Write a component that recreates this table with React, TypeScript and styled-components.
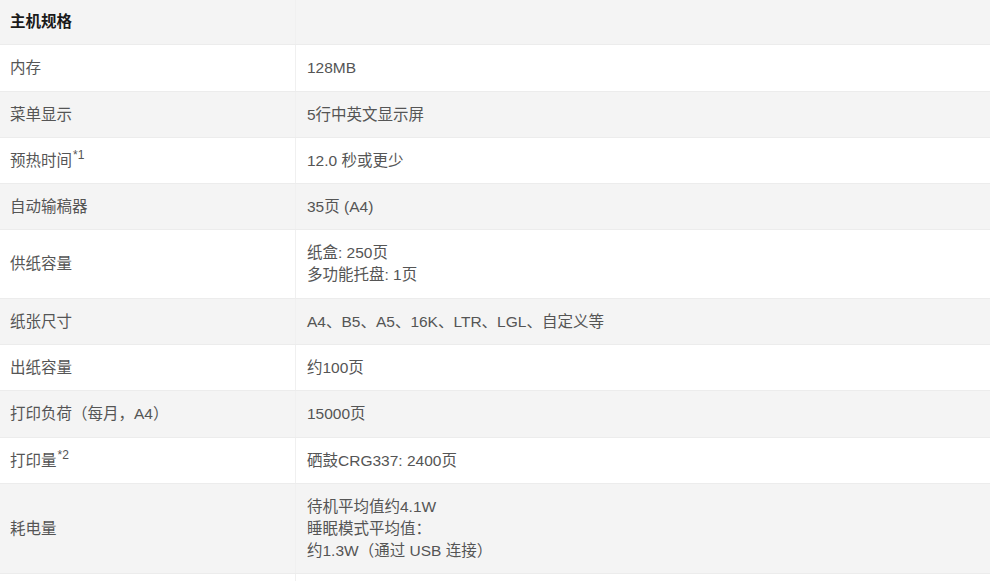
import * as React from "react";
import styled, { createGlobalStyle } from "styled-components";

const GlobalStyle = createGlobalStyle`
	html, body {
		margin: 0;
		padding: 0;
		background: #fff;
	}
	body {
		font-family: "Liberation Sans", Arial, "Noto Sans CJK SC", sans-serif;
		font-size: 15.5px;
		color: #555;
	}
`;

const SpecTable = styled.div`
	width: 990px;
	margin-top: -1px;
`;

const Row = styled.div<{ $shaded: boolean }>`
	display: grid;
	grid-template-columns: 295px 1fr;
	background: ${p => (p.$shaded ? "#f4f4f4" : "#fff")};
	border-bottom: 1px solid #ececec;
`;

const Cell = styled.div<{ $shaded: boolean }>`
	display: flex;
	flex-direction: column;
	justify-content: center;
	padding: 12px 11px 11.3px 10px;
	line-height: 22px;
	& + & {
		border-left: 1px solid ${p => (p.$shaded ? "#fcfcfc" : "#f0f0f0")};
		padding-left: 11px;
	}
`;

const HeadCell = styled(Cell)`
	font-weight: bold;
	color: #1a1a1a;
	font-size: 15.5px;
`;

const Note = styled.sup`
	font-size: 12px;
	line-height: 0;
	vertical-align: 7px;
	margin-left: 1px;
`;

type Spec = { label: string; note?: string; lines: string[] };

const specs: Spec[] = [
	{ label: "内存", lines: ["128MB"] },
	{ label: "菜单显示", lines: ["5行中英文显示屏"] },
	{ label: "预热时间", note: "*1", lines: ["12.0 秒或更少"] },
	{ label: "自动输稿器", lines: ["35页 (A4)"] },
	{ label: "供纸容量", lines: ["纸盒: 250页", "多功能托盘: 1页"] },
	{ label: "纸张尺寸", lines: ["A4、B5、A5、16K、LTR、LGL、自定义等"] },
	{ label: "出纸容量", lines: ["约100页"] },
	{ label: "打印负荷（每月，A4）", lines: ["15000页"] },
	{ label: "打印量", note: "*2", lines: ["硒鼓CRG337: 2400页"] },
	{ label: "耗电量", lines: ["待机平均值约4.1W", "睡眠模式平均值：", "约1.3W（通过 USB 连接）"] },
	{ label: "", lines: [""] },
];

export default function App() {
	return (
		<>
			<GlobalStyle />
			<SpecTable>
				<Row $shaded>
					<HeadCell $shaded>主机规格</HeadCell>
					<HeadCell $shaded>&nbsp;</HeadCell>
				</Row>
				{specs.map((s, i) => {
					const shaded = i % 2 == 1;
					return (
						<Row key={i} $shaded={shaded}>
							<Cell $shaded={shaded}>
								<span>
									{s.label || "\u00a0"}
									{s.note ? <Note>{s.note}</Note> : null}
								</span>
							</Cell>
							<Cell $shaded={shaded}>
								{s.lines.map((l, j) => (
									<span key={j}>{l || "\u00a0"}</span>
								))}
							</Cell>
						</Row>
					);
				})}
			</SpecTable>
		</>
	);
}
